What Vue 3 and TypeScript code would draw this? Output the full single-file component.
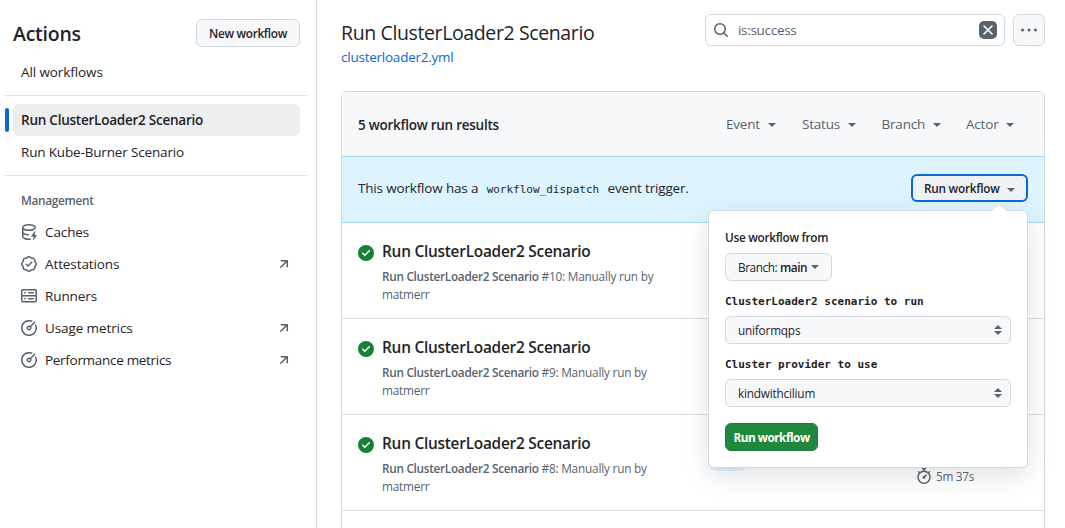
<script setup lang="ts">
interface NavItem {
  label: string
  icon: string
  external: boolean
  cls: string
}

const icons: Record<string, string> = {
  cache:
    'M2.5 5.724V8c0 .248.238.7 1.169 1.159.874.43 2.144.745 3.62.822a.75.75 0 1 1-.078 1.498c-1.622-.085-3.102-.432-4.204-.975a5.565 5.565 0 0 1-.507-.28V12.5c0 .133.058.318.282.551.227.237.591.483 1.101.707 1.015.447 2.47.742 4.117.742.406 0 .802-.018 1.183-.052a.751.751 0 1 1 .134 1.494C8.89 15.98 8.45 16 8 16c-1.805 0-3.475-.32-4.721-.869-.623-.274-1.173-.619-1.579-1.041-.408-.425-.7-.964-.7-1.59v-9c0-.626.292-1.165.7-1.591.406-.42.956-.766 1.579-1.04C4.525.32 6.195 0 8 0c1.806 0 3.476.32 4.721.869.623.274 1.173.619 1.579 1.041.408.425.7.964.7 1.59 0 .626-.292 1.165-.7 1.591-.406.42-.956.766-1.578 1.04C11.475 6.68 9.805 7 8 7c-1.805 0-3.475-.32-4.721-.869a6.15 6.15 0 0 1-.779-.407Zm0-2.224c0 .133.058.318.282.551.227.237.591.483 1.101.707C4.898 5.205 6.353 5.5 8 5.5c1.646 0 3.101-.295 4.118-.742.508-.224.873-.471 1.1-.708.224-.232.282-.417.282-.55 0-.133-.058-.318-.282-.551-.227-.237-.591-.483-1.101-.707C11.102 1.795 9.647 1.5 8 1.5c-1.646 0-3.101.295-4.118.742-.508.224-.873.471-1.1.708-.224.232-.282.417-.282.55ZM14.49 7.582a.375.375 0 0 0-.66-.313l-3.625 4.625a.375.375 0 0 0 .295.606h2.127l-.619 2.922a.375.375 0 0 0 .666.304l3.125-4.125A.375.375 0 0 0 15.5 11h-1.778l.769-3.418Z',
  verified:
    'm9.585.52.929.68c.153.112.331.186.518.215l1.138.175a2.678 2.678 0 0 1 2.24 2.24l.174 1.139c.029.187.103.365.215.518l.68.928a2.677 2.677 0 0 1 0 3.17l-.68.928a1.174 1.174 0 0 0-.215.518l-.175 1.138a2.678 2.678 0 0 1-2.241 2.241l-1.138.175a1.17 1.17 0 0 0-.518.215l-.928.68a2.677 2.677 0 0 1-3.17 0l-.928-.68a1.174 1.174 0 0 0-.518-.215L3.83 14.41a2.678 2.678 0 0 1-2.24-2.24l-.175-1.138a1.17 1.17 0 0 0-.215-.518l-.68-.928a2.677 2.677 0 0 1 0-3.17l.68-.928c.112-.153.186-.331.215-.518l.175-1.14a2.678 2.678 0 0 1 2.24-2.24l1.139-.175c.187-.029.365-.103.518-.215l.928-.68a2.677 2.677 0 0 1 3.17 0ZM7.303 1.728l-.927.68a2.67 2.67 0 0 1-1.18.489l-1.137.174a1.179 1.179 0 0 0-.987.987l-.174 1.136a2.677 2.677 0 0 1-.489 1.18l-.68.928a1.18 1.18 0 0 0 0 1.394l.68.927c.256.348.424.753.489 1.18l.174 1.137c.078.509.478.909.987.987l1.136.174a2.67 2.67 0 0 1 1.18.489l.928.68c.414.305.979.305 1.394 0l.927-.68a2.67 2.67 0 0 1 1.18-.489l1.137-.174a1.18 1.18 0 0 0 .987-.987l.174-1.136a2.67 2.67 0 0 1 .489-1.18l.68-.928a1.176 1.176 0 0 0 0-1.394l-.68-.927a2.686 2.686 0 0 1-.489-1.18l-.174-1.137a1.179 1.179 0 0 0-.987-.987l-1.136-.174a2.677 2.677 0 0 1-1.18-.489l-.928-.68a1.176 1.176 0 0 0-1.394 0ZM11.28 6.78l-3.75 3.75a.75.75 0 0 1-1.06 0L4.72 8.78a.751.751 0 0 1 .018-1.042.751.751 0 0 1 1.042-.018L7 8.94l3.22-3.22a.751.751 0 0 1 1.042.018.751.751 0 0 1 .018 1.042Z',
  server:
    'M1.75 1h12.5c.966 0 1.75.784 1.75 1.75v4c0 .372-.116.717-.314 1 .198.283.314.628.314 1v4a1.75 1.75 0 0 1-1.75 1.75H1.75A1.75 1.75 0 0 1 0 12.75v-4c0-.358.109-.707.314-1a1.739 1.739 0 0 1-.314-1v-4C0 1.784.784 1 1.75 1ZM1.5 2.75v4c0 .138.112.25.25.25h12.5a.25.25 0 0 0 .25-.25v-4a.25.25 0 0 0-.25-.25H1.75a.25.25 0 0 0-.25.25Zm.25 5.75a.25.25 0 0 0-.25.25v4c0 .138.112.25.25.25h12.5a.25.25 0 0 0 .25-.25v-4a.25.25 0 0 0-.25-.25ZM7 4.75A.75.75 0 0 1 7.75 4h4.5a.75.75 0 0 1 0 1.5h-4.5A.75.75 0 0 1 7 4.75ZM7.75 10h4.5a.75.75 0 0 1 0 1.5h-4.5a.75.75 0 0 1 0-1.5ZM3 4.75A.75.75 0 0 1 3.75 4h.5a.75.75 0 0 1 0 1.5h-.5A.75.75 0 0 1 3 4.75ZM3.75 10h.5a.75.75 0 0 1 0 1.5h-.5a.75.75 0 0 1 0-1.5Z',
  meter:
    'M8 1.5a6.5 6.5 0 1 0 6.016 4.035.75.75 0 0 1 1.388-.57 8 8 0 1 1-4.37-4.37.75.75 0 0 1-.569 1.389A6.473 6.473 0 0 0 8 1.5Zm6.28.22a.75.75 0 0 1 0 1.06l-4.063 4.064a2.5 2.5 0 1 1-1.06-1.06L13.22 1.72a.75.75 0 0 1 1.06 0ZM7 8a1 1 0 1 0 2 0 1 1 0 0 0-2 0Z',
  arrow:
    'M4.53 4.75A.75.75 0 0 1 5.28 4h6.01a.75.75 0 0 1 .75.75v6.01a.75.75 0 0 1-1.5 0v-4.2l-5.26 5.261a.749.749 0 0 1-1.275-.326.749.749 0 0 1 .215-.734L9.48 5.5h-4.2a.75.75 0 0 1-.75-.75Z',
  search:
    'M10.68 11.74a6 6 0 0 1-7.922-8.982 6 6 0 0 1 8.982 7.922l3.04 3.04a.749.749 0 0 1-.326 1.275.749.749 0 0 1-.734-.215ZM11.5 7a4.499 4.499 0 1 0-8.997 0A4.499 4.499 0 0 0 11.5 7Z',
  success:
    'M8 16A8 8 0 1 1 8 0a8 8 0 0 1 0 16Zm3.78-9.72a.751.751 0 0 0-.018-1.042.751.751 0 0 0-1.042-.018L6.75 9.19 5.28 7.72a.751.751 0 0 0-1.042.018.751.751 0 0 0-.018 1.042l2 2a.75.75 0 0 0 1.06 0Z',
  stopwatch:
    'M5.75.75A.75.75 0 0 1 6.5 0h3a.75.75 0 0 1 0 1.5h-.75v1l-.001.041a6.724 6.724 0 0 1 3.464 1.435l.007-.006.75-.75a.749.749 0 0 1 1.275.326.749.749 0 0 1-.215.734l-.75.75-.006.007a6.75 6.75 0 1 1-10.548 0L2.72 5.03l-.75-.75a.751.751 0 0 1 .018-1.042.751.751 0 0 1 1.042-.018l.75.75.007.006A6.72 6.72 0 0 1 7.25 2.541V1.5H6.5a.75.75 0 0 1-.75-.75ZM8 14.5a5.25 5.25 0 1 0-.001-10.501A5.25 5.25 0 0 0 8 14.5Zm.389-6.7 1.33-1.33a.75.75 0 1 1 1.061 1.06L9.45 8.861A1.503 1.503 0 0 1 8 10.75a1.499 1.499 0 1 1 .389-2.95Z',
}

const management: NavItem[] = [
  { label: 'Caches', icon: 'cache', external: false, cls: 'nav-caches' },
  { label: 'Attestations', icon: 'verified', external: true, cls: 'nav-attest' },
  { label: 'Runners', icon: 'server', external: false, cls: 'nav-runners' },
  { label: 'Usage metrics', icon: 'meter', external: true, cls: 'nav-usage' },
  { label: 'Performance metrics', icon: 'meter', external: true, cls: 'nav-perf' },
]

const filters: string[] = ['Event', 'Status', 'Branch', 'Actor']

const runs: { id: number; duration: string }[] = [
  { id: 10, duration: '' },
  { id: 9, duration: '' },
  { id: 8, duration: '5m 37s' },
]

const inputs: { label: string; value: string }[] = [
  { label: 'ClusterLoader2 scenario to run', value: 'uniformqps' },
  { label: 'Cluster provider to use', value: 'kindwithcilium' },
]
</script>

<template>
  <div class="page">
    <aside class="sidebar">
      <header class="side-head">
        <h2>Actions</h2>
        <button class="btn new-btn"><span>New workflow</span></button>
      </header>
      <a class="nav-item">All workflows</a>
      <hr />
      <a class="nav-item active">Run ClusterLoader2 Scenario</a>
      <a class="nav-item burner">Run Kube-Burner Scenario</a>
      <hr />
      <h3>Management</h3>
      <a v-for="item in management" :key="item.label" class="nav-item" :class="item.cls">
        <svg class="lead" width="16" height="16" viewBox="0 0 16 16"><path :d="icons[item.icon]" /></svg>
        <span class="nav-label">{{ item.label }}</span>
        <svg v-if="item.external" class="ext" width="16" height="16" viewBox="0 0 16 16"><path :d="icons.arrow" /></svg>
      </a>
    </aside>

    <main class="main">
      <header class="main-head">
        <div class="heading">
          <h1>Run ClusterLoader2 Scenario</h1>
          <a class="file">clusterloader2.yml</a>
        </div>
        <div class="search">
          <svg width="16" height="16" viewBox="0 0 16 16"><path :d="icons.search" /></svg>
          <span class="query">is:success</span>
          <svg class="clear" width="18" height="18" viewBox="0 0 18 18">
            <rect width="18" height="18" rx="5" />
            <path d="M5 5l8 8M13 5l-8 8" />
          </svg>
        </div>
        <button class="more">
          <svg width="18" height="4" viewBox="0 0 18 4">
            <circle cx="2.5" cy="2" r="1.5" /><circle cx="9" cy="2" r="1.5" /><circle cx="15.5" cy="2" r="1.5" />
          </svg>
        </button>
      </header>

      <section class="box">
        <div class="box-head">
          <strong>5 workflow run results</strong>
          <div class="filters">
            <span v-for="f in filters" :key="f" class="filter"><span>{{ f }}</span><i class="caret"></i></span>
          </div>
        </div>
        <div class="dispatch">
          <p>This workflow has a <code>workflow_dispatch</code> event trigger.</p>
          <div class="menu-anchor">
            <button class="run-toggle"><span>Run workflow</span><i class="caret"></i></button>
            <div class="popover">
              <svg class="tip" width="16" height="8" viewBox="0 0 16 8">
                <path class="tip-fill" d="M0 8L8 0l8 8z" />
                <path class="tip-line" d="M.5 7.5L8 .5l7.5 7" />
              </svg>
              <div class="field-label from">Use workflow from</div>
              <button class="btn branch"><span>Branch: <b>main</b></span><i class="caret"></i></button>
              <template v-for="input in inputs" :key="input.label">
                <div class="field-label mono">{{ input.label }}</div>
                <div class="select">
                  <span>{{ input.value }}</span>
                  <svg width="8" height="10" viewBox="0 0 8 10"><path d="M0 4L4 0l4 4zM0 6h8l-4 4z" /></svg>
                </div>
              </template>
              <button class="submit"><span>Run workflow</span></button>
            </div>
          </div>
        </div>
        <article v-for="run in runs" :key="run.id" class="run">
          <svg class="status" width="16" height="16" viewBox="0 0 16 16"><path :d="icons.success" /></svg>
          <div class="run-text">
            <h4>Run ClusterLoader2 Scenario</h4>
            <p><b>Run ClusterLoader2 Scenario</b> <span>#{{ run.id }}: Manually run by</span> <a>matmerr</a></p>
          </div>
          <span class="branch-tag"></span>
          <div v-if="run.duration" class="meta">
            <svg width="16" height="16" viewBox="0 0 16 16"><path :d="icons.stopwatch" /></svg>
            <span>{{ run.duration }}</span>
          </div>
        </article>
      </section>
    </main>
  </div>
</template>

<style>
body {
  background: #fff;
  overflow: hidden;
}
</style>

<style scoped>
* {
  box-sizing: border-box;
}
.page {
  display: flex;
  height: 528px;
  overflow: hidden;
  color: #1f2328;
  background: #fff;
  font: 13.5px/20px "Open Sans", "Noto Sans", sans-serif;
  letter-spacing: -0.2px;
}
h1, h2, h3, h4, p {
  margin: 0;
}
button {
  font: inherit;
  letter-spacing: inherit;
  color: inherit;
  padding: 0;
}
svg {
  fill: #59636e;
  flex: none;
}
.sidebar {
  width: 317px;
  flex: none;
  border-right: 1px solid #d1d9e0;
  padding: 19px 8px 0 5px;
}
.side-head {
  display: flex;
  justify-content: space-between;
  align-items: center;
  height: 28px;
  margin: 0 8px 9px;
}
h2 {
  font-size: 19.5px;
  line-height: 28px;
  font-weight: 600;
  letter-spacing: -0.25px;
  padding-top: 1px;
}
.btn {
  height: 28px;
  border: 1px solid #d1d9e0;
  border-radius: 6px;
  background: #f6f8fa;
  font-size: 11.8px;
}
.new-btn {
  width: 104px;
  font-weight: 600;
  letter-spacing: -0.32px;
}
.nav-item {
  position: relative;
  display: flex;
  align-items: center;
  height: 32px;
  margin: 0 8px;
  padding: 0 8px;
  border-radius: 6px;
  letter-spacing: -0.1px;
}
hr {
  height: 1px;
  border: 0;
  background: #dfe2e5;
  margin: 7px 0 8px;
}
.nav-item.active {
  background: #eceef0;
  font-weight: 600;
  letter-spacing: -0.24px;
}
.nav-item.burner {
  letter-spacing: -0.16px;
}
.nav-item.nav-perf {
  letter-spacing: -0.3px;
}
.active::before {
  content: "";
  position: absolute;
  left: -8px;
  top: 4px;
  width: 4px;
  height: 24px;
  border-radius: 6px;
  background: #0969da;
}
h3 {
  color: #59636e;
  font-size: 11.8px;
  line-height: 18px;
  font-weight: 600;
  letter-spacing: -0.3px;
  margin: 0 16px;
  padding: 7px 0;
}
.lead {
  margin-right: 8px;
}
.ext {
  margin-left: auto;
}
.main {
  flex: none;
  width: 704px;
  margin-left: 24px;
}
.main-head {
  display: flex;
  height: 91px;
  padding-top: 14px;
}
.heading {
  flex: 1;
  padding-top: 4px;
}
h1 {
  font-size: 19.5px;
  line-height: 30px;
  font-weight: 400;
  letter-spacing: -0.38px;
}
.file {
  display: block;
  color: #0969da;
  line-height: 20px;
  margin-top: -1px;
  letter-spacing: -0.24px;
}
.search {
  display: flex;
  align-items: center;
  width: 300px;
  height: 32px;
  border: 1px solid #d1d9e0;
  border-radius: 6px;
  padding: 0 7px;
  color: #59636e;
}
.query {
  flex: 1;
  margin-left: 9px;
  letter-spacing: -0.3px;
}
.clear path {
  stroke: #fff;
  stroke-width: 1.6;
  stroke-linecap: round;
}
.more {
  display: flex;
  align-items: center;
  justify-content: center;
  width: 32px;
  height: 32px;
  margin-left: 8px;
  border: 1px solid #d1d9e0;
  border-radius: 6px;
  background: #f6f8fa;
}
.box {
  height: 460px;
  border: 1px solid #d1d9e0;
  border-radius: 6px 6px 0 0;
}
.box-head {
  display: flex;
  align-items: center;
  justify-content: space-between;
  height: 64px;
  padding: 2px 0 0 16px;
  background: #f6f8fa;
  border-radius: 5px 5px 0 0;
}
.box-head strong {
  font-weight: 600;
  letter-spacing: -0.25px;
}
.filters {
  display: grid;
  grid-template-columns: 76px 79.5px 84.5px 78px;
  color: #59636e;
}
.filter {
  display: flex;
  align-items: center;
}
.filter span {
  padding-bottom: 2px;
}
.caret {
  border: 4px solid transparent;
  border-top-color: #59636e;
  border-bottom: 0;
  width: 0;
  height: 0;
  margin-left: 8px;
}
.dispatch {
  display: flex;
  align-items: center;
  justify-content: space-between;
  height: 67px;
  padding: 0 16px;
  background: #ddf4ff;
  border: solid #a5d8ff;
  border-width: 1px 0;
}
.dispatch p {
  padding-bottom: 4px;
  letter-spacing: -0.17px;
}
code {
  font: 11px "DejaVu Sans Mono", monospace;
  letter-spacing: 0;
  padding: 0 5px;
}
.menu-anchor {
  position: relative;
  margin-bottom: 3px;
}
.run-toggle {
  display: flex;
  align-items: center;
  width: 117px;
  height: 28px;
  padding-left: 11px;
  border: 2px solid #0969da;
  border-radius: 6px;
  background: #eff2f5;
  font-size: 11.8px;
  font-weight: 600;
  letter-spacing: -0.25px;
}
.run-toggle .caret {
  margin: 3px 0 0 7px;
}
.popover {
  position: absolute;
  z-index: 5;
  right: 0;
  top: 36px;
  width: 320px;
  height: 258px;
  padding: 17px 16px;
  border: 1px solid #d1d9e0;
  border-radius: 6px;
  background: #fff;
  box-shadow: 0 8px 24px rgba(100, 110, 120, 0.2);
  font-size: 11.8px;
  line-height: 18px;
}
.tip {
  position: absolute;
  right: 20px;
  top: -8px;
}
.tip-fill {
  fill: #fff;
}
.tip-line {
  fill: none;
  stroke: #d1d9e0;
}
.field-label {
  font-weight: 600;
  letter-spacing: -0.3px;
}
.branch {
  display: flex;
  align-items: center;
  width: 107px;
  margin-top: 7px;
  padding-left: 12px;
  letter-spacing: -0.42px;
}
.branch b {
  font-weight: 600;
}
.branch .caret {
  margin-left: 4px;
}
.mono {
  font: bold 11px/18px "DejaVu Sans Mono", monospace;
  letter-spacing: 0;
  margin-top: 12px;
}
.select {
  display: flex;
  align-items: center;
  justify-content: space-between;
  height: 28px;
  margin-top: 5px;
  padding: 0 8px 0 12px;
  border: 1px solid #d1d9e0;
  border-radius: 6px;
  background: #f6f8fa;
}
.submit {
  width: 93px;
  height: 28px;
  margin-top: 16px;
  border: 1px solid #1f7a37;
  border-radius: 6px;
  background: #1f883d;
  color: #fff;
  font-weight: 700;
  letter-spacing: -0.5px;
}
.run {
  display: flex;
  height: 96px;
  padding: 18px 16px 0;
  border-bottom: 1px solid #d8dee4;
}
.status {
  margin-top: 4px;
  fill: #1a7f37;
}
.run-text {
  width: 293px;
  margin-left: 8px;
}
h4 {
  font-size: 15.4px;
  line-height: 22px;
  font-weight: 600;
  letter-spacing: -0.24px;
}
.run-text p {
  color: #59636e;
  font-size: 11.8px;
  line-height: 18px;
  margin-top: 4px;
}
.run-text b {
  font-weight: 600;
  letter-spacing: -0.3px;
}
.branch-tag {
  width: 37px;
  height: 20px;
  margin: 18px 0 0 34px;
  border-radius: 6px;
  background: #ddf4ff;
}
.meta {
  display: flex;
  align-items: center;
  gap: 4px;
  height: 18px;
  margin: 34px 0 0 170px;
  color: #59636e;
  font-size: 11.8px;
  line-height: 18px;
}
.meta span {
  padding-bottom: 1px;
  letter-spacing: -0.3px;
}
</style>
